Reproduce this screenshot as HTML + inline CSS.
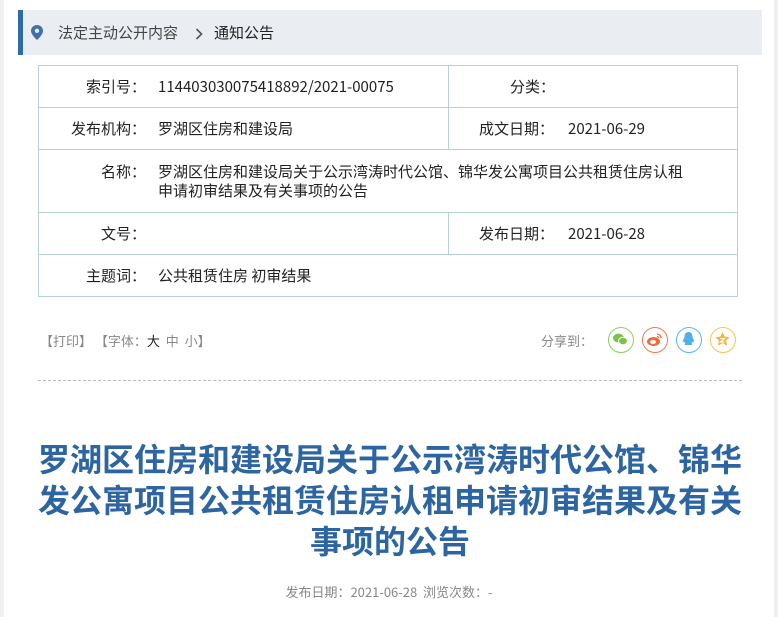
<!DOCTYPE html>
<html><head><meta charset="utf-8"><style>
*{margin:0;padding:0;box-sizing:border-box}
body{width:778px;height:617px;background:#fff;position:relative;overflow:hidden;font-family:"Noto Sans CJK SC","Liberation Sans",sans-serif;color:#222}
.a{position:absolute;white-space:nowrap;line-height:20px}
.t{position:absolute;left:38px;top:65px;width:700px;height:232px;border:1px solid #b7cfe0}
.h{position:absolute;left:0;width:698px;height:1px;background:#b7cfe0}
.v{position:absolute;left:409px;width:1px;background:#b7cfe0}
.f{font-size:15px}
.ic{position:absolute;top:327px;width:26px;height:26px;border-radius:50%;border:1.5px solid}
</style></head><body>
<div class="a" style="left:0;top:0;width:4px;height:617px;background:#f0f0f0"></div>
<div class="a" style="left:774px;top:0;width:4px;height:617px;background:#f0f0f0"></div>
<div class="a" style="left:18px;top:10px;width:744px;height:45px;background:#eaeef2;border-left:5px solid #2e6aa3"></div>
<svg class="a" style="left:31px;top:25px" width="12" height="15" viewBox="0 0 12 15"><path d="M6 0C2.7 0 0 2.6 0 5.8 0 10 6 15 6 15s6-5 6-9.2C12 2.6 9.3 0 6 0z" fill="#3c72a8"/><circle cx="6" cy="5.8" r="2.2" fill="#eaeef2"/></svg>
<div class="a" style="left:58px;top:23px;font-size:15px;color:#444">法定主动公开内容</div>
<svg class="a" style="left:195px;top:28px" width="8" height="12"><path d="M1.5 1l5 5-5 5" stroke="#555" stroke-width="1.6" fill="none"/></svg>
<div class="a" style="left:214px;top:23px;font-size:15px;color:#222">通知公告</div>
<div class="t">
<div class="h" style="top:41px"></div><div class="h" style="top:83px"></div><div class="h" style="top:146px"></div><div class="h" style="top:188px"></div>
<div class="v" style="top:0;height:41px"></div><div class="v" style="top:41px;height:42px"></div><div class="v" style="top:146px;height:42px"></div>
</div>
<div class="a f" style="left:86px;top:77px">索引号：</div>
<div class="a f" style="left:158px;top:77px">114403030075418892/2021-00075</div>
<div class="a f" style="left:510px;top:77px">分类：</div>
<div class="a f" style="left:71px;top:119px">发布机构：</div>
<div class="a f" style="left:158px;top:119px">罗湖区住房和建设局</div>
<div class="a f" style="left:479px;top:119px">成文日期：</div>
<div class="a f" style="left:568px;top:119px">2021-06-29</div>
<div class="a f" style="left:101px;top:162px">名称：</div>
<div class="a f" style="left:158px;top:162px;line-height:19px">罗湖区住房和建设局关于公示湾涛时代公馆、锦华发公寓项目公共租赁住房认租<br>申请初审结果及有关事项的公告</div>
<div class="a f" style="left:101px;top:224px">文号：</div>
<div class="a f" style="left:479px;top:224px">发布日期：</div>
<div class="a f" style="left:568px;top:224px">2021-06-28</div>
<div class="a f" style="left:86px;top:266px">主题词：</div>
<div class="a f" style="left:158px;top:266px">公共租赁住房 初审结果</div>
<div class="a" style="left:40px;top:331px;font-size:13px;color:#888">【打印】 【字体：<span style="color:#222">大</span>&nbsp; 中 &nbsp;小】</div>
<div class="a" style="left:541px;top:331px;font-size:13px;color:#888">分享到：</div>
<div class="ic" style="left:608px;border-color:#8ccf5f"><svg width="23" height="23" viewBox="0 0 23 23"><ellipse cx="9.5" cy="10" rx="5.5" ry="4.5" fill="#7cc24b"/><ellipse cx="14" cy="13" rx="4.5" ry="3.7" fill="#7cc24b" stroke="#fff" stroke-width="1"/></svg></div>
<div class="ic" style="left:642px;border-color:#f47a4d"><svg width="23" height="23" viewBox="0 0 23 23"><ellipse cx="10.5" cy="13.5" rx="6.5" ry="4.5" fill="#f26a3a"/><ellipse cx="10" cy="14" rx="3" ry="2" fill="#fff"/><path d="M14 6a4 4 0 0 1 4 4M14 8.5a1.6 1.6 0 0 1 1.6 1.6" stroke="#f26a3a" stroke-width="1.3" fill="none"/></svg></div>
<div class="ic" style="left:676px;border-color:#5cb6ea"><svg width="23" height="23" viewBox="0 0 23 23"><path d="M11.5 4c-3 0-4 2.5-4 5 0 1-2 3-1.7 5 .8 0 1.2-.8 1.2-.8.3 1 1 2 1.5 2.3-1 .6-1 1.5.5 1.5h5c1.5 0 1.5-.9.5-1.5.5-.3 1.2-1.3 1.5-2.3 0 0 .4.8 1.2.8.3-2-1.7-4-1.7-5 0-2.5-1-5-4-5z" fill="#4fb0e8"/></svg></div>
<div class="ic" style="left:710px;border-color:#f7c355"><svg width="23" height="23" viewBox="0 0 23 23"><path d="M11.5 4l2.2 4.6 5 .6-3.7 3.4 1 5-4.5-2.5-4.5 2.5 1-5-3.7-3.4 5-.6z" fill="#f5b52e"/><path d="M9.5 10.5h4l-4 3.5h4" stroke="#fff" stroke-width="1.2" fill="none"/></svg></div>
<div class="a" style="left:38px;top:380px;width:704px;border-top:1px dashed #bbb"></div>
<div class="a" style="left:34px;top:438px;width:712px;text-align:center;white-space:normal;font-size:32px;font-weight:bold;line-height:41px;color:#2d65a2">罗湖区住房和建设局关于公示湾涛时代公馆、锦华发公寓项目公共租赁住房认租申请初审结果及有关事项的公告</div>
<div class="a" style="left:0;width:778px;top:582px;text-align:center;font-size:13px;color:#888">发布日期：2021-06-28&nbsp; 浏览次数：-</div>
</body></html>
